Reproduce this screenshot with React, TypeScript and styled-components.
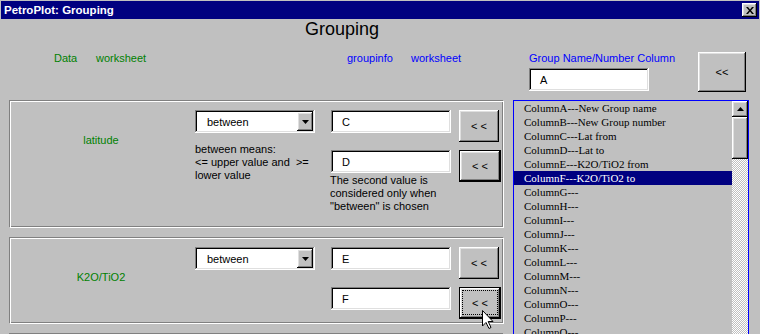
import React from 'react';
import styled, { createGlobalStyle, css } from 'styled-components';

const GlobalStyle = createGlobalStyle`
  html, body {
    margin: 0;
    padding: 0;
    background: #c0c0c0;
  }
  body {
    font-family: "Liberation Sans", Arial, sans-serif;
    font-size: 11px;
    color: #000;
  }
  * {
    box-sizing: border-box;
  }
`;

const raised = css`
  background: #c0c0c0;
  box-shadow: inset -1px -1px #000, inset 1px 1px #fff, inset -2px -2px #808080,
    inset 2px 2px #dfdfdf;
`;

const sunken = css`
  background: #fff;
  box-shadow: inset -1px -1px #fff, inset 1px 1px #808080, inset -2px -2px #dfdfdf,
    inset 2px 2px #000;
`;

const columns = [
  'ColumnA---New Group name',
  'ColumnB---New Group number',
  'ColumnC---Lat from',
  'ColumnD---Lat to',
  'ColumnE---K2O/TiO2 from',
  'ColumnF---K2O/TiO2 to',
  'ColumnG---',
  'ColumnH---',
  'ColumnI---',
  'ColumnJ---',
  'ColumnK---',
  'ColumnL---',
  'ColumnM---',
  'ColumnN---',
  'ColumnO---',
  'ColumnP---',
  'ColumnQ---',
  'ColumnR---',
];

const DownArrow = () => (
  <svg width="7" height="4" viewBox="0 0 7 4">
    <polygon points="0,0 7,0 3.5,4" fill="#000" />
  </svg>
);

const UpArrow = () => (
  <svg width="7" height="4" viewBox="0 0 7 4">
    <polygon points="0,4 7,4 3.5,0" fill="#000" />
  </svg>
);

const CloseGlyph = () => (
  <svg width="8" height="7" viewBox="0 0 8 7">
    <path d="M0 0h2l2 2.5L6 0h2L5 3.5 8 7H6L4 4.5 2 7H0l3-3.5z" fill="#000" />
  </svg>
);

const Pointer = () => (
  <svg width="12" height="19" viewBox="0 0 12 19">
    <polygon
      points="0.5,0.5 0.5,16 4,12.5 7,18.5 9,17.5 6.2,11.5 11,11.5"
      fill="#fff"
      stroke="#000"
      strokeWidth="1"
    />
  </svg>
);

type GroupProps = {
  label: string;
  from: string;
  to: string;
  height: number;
  withNotes?: boolean;
  focusLast?: boolean;
};

const GroupFrame = ({ label, from, to, height, withNotes, focusLast }: GroupProps) => (
  <Frame $h={height}>
    <FrameLabel>{label}</FrameLabel>
    <Col>
      <Select>
        <span>between</span>
        <DropButton>
          <DownArrow />
        </DropButton>
      </Select>
      {withNotes && (
        <Note $mt={10}>
          between means:
          <br />
          {'<= upper value and  >='}
          <br />
          lower value
        </Note>
      )}
    </Col>
    <Col>
      <TextBox>{from}</TextBox>
      <TextBox $mt={17}>{to}</TextBox>
      {withNotes && (
        <Note $mt={1} $ml={-1}>
          The second value is
          <br />
          considered only when
          <br />
          "between" is chosen
        </Note>
      )}
    </Col>
    <Col>
      <Button $w={40} $h={32}>
        &lt; &lt;
      </Button>
      <Button $w={42} $h={32} $mt={8} $default $focused={focusLast}>
        &lt; &lt;
      </Button>
    </Col>
  </Frame>
);

const App = () => {
  return (
    <Window>
      <GlobalStyle />
      <TitleBar>
        <span>PetroPlot: Grouping</span>
        <CloseButton>
          <CloseGlyph />
        </CloseButton>
      </TitleBar>
      <Main>
        <LeftHeader>
          <Heading>Grouping</Heading>
          <LabelsRow>
            <Caption $tone="green" $w={42}>
              Data
            </Caption>
            <Caption $tone="green" $w={251}>
              worksheet
            </Caption>
            <Caption $tone="blue" $w={64}>
              groupinfo
            </Caption>
            <Caption $tone="blue">worksheet</Caption>
          </LabelsRow>
        </LeftHeader>
        <RightHeader>
          <GroupField>
            <Caption $tone="blue">Group Name/Number Column</Caption>
            <TextBox $mt={3}>A</TextBox>
          </GroupField>
          <HeaderButton $w={48} $h={40}>
            &lt;&lt;
          </HeaderButton>
        </RightHeader>
        <FrameStack>
          <GroupFrame label="latitude" from="C" to="D" height={128} withNotes />
          <GroupFrame label="K2O/TiO2" from="E" to="F" height={87} focusLast />
          <Frame $h={80} />
        </FrameStack>
        <ListBox>
          <ListItems>
            {columns.map((c, i) => (
              <ListItem key={c} $selected={i === 5}>
                {c}
              </ListItem>
            ))}
          </ListItems>
          <ScrollBar>
            <ScrollButton>
              <UpArrow />
            </ScrollButton>
            <ScrollThumb />
          </ScrollBar>
        </ListBox>
      </Main>
      <Cursor>
        <Pointer />
      </Cursor>
    </Window>
  );
};

export default App;

const Window = styled.div`
  position: relative;
  width: 760px;
  height: 334px;
  overflow: hidden;
  background: #c0c0c0;
`;

const TitleBar = styled.div`
  display: flex;
  align-items: center;
  justify-content: space-between;
  height: 18px;
  margin: 1px 1px 0;
  padding: 0 2px 0 3px;
  background: #000080;
  color: #fff;
  font-weight: bold;
  font-size: 11.5px;
`;

const CloseButton = styled.div`
  ${raised};
  width: 15px;
  height: 14px;
  display: flex;
  align-items: center;
  justify-content: center;
`;

const Main = styled.div`
  display: grid;
  grid-template-columns: 495px 236px;
  grid-template-rows: 81px auto;
  column-gap: 9px;
  padding-left: 9px;
`;

const LeftHeader = styled.div`
  display: flex;
  flex-direction: column;
`;

const Heading = styled.div`
  font-size: 18px;
  line-height: 21px;
  padding-left: 296px;
`;

const LabelsRow = styled.div`
  display: flex;
  margin-top: 12px;
  padding-left: 45px;
`;

const Caption = styled.span<{ $tone: 'green' | 'blue'; $w?: number }>`
  display: block;
  line-height: 13px;
  white-space: nowrap;
  color: ${({ $tone }) => ($tone === 'green' ? '#008000' : '#0000ff')};
  width: ${({ $w }) => ($w ? `${$w}px` : 'auto')};
`;

const RightHeader = styled.div`
  display: flex;
  align-items: flex-start;
  padding-top: 33px;
`;

const GroupField = styled.div`
  display: flex;
  flex-direction: column;
  padding-left: 16px;
`;

const TextBox = styled.div<{ $mt?: number }>`
  ${sunken};
  width: 120px;
  height: 23px;
  margin-top: ${({ $mt }) => $mt || 0}px;
  padding-left: 11px;
  display: flex;
  align-items: center;
`;

const Button = styled.div<{
  $w: number;
  $h: number;
  $mt?: number;
  $default?: boolean;
  $focused?: boolean;
}>`
  ${raised};
  position: relative;
  width: ${({ $w }) => $w}px;
  height: ${({ $h }) => $h}px;
  margin-top: ${({ $mt }) => $mt || 0}px;
  display: flex;
  align-items: center;
  justify-content: center;
  ${({ $default }) =>
    $default &&
    css`
      border: 1px solid #000;
    `}
  ${({ $focused }) =>
    $focused &&
    css`
      &::after {
        content: '';
        position: absolute;
        inset: 2px 2px 3px 2px;
        border: 1px dotted #000;
      }
    `}
`;

const HeaderButton = styled(Button)`
  margin-left: auto;
  margin-right: 3px;
`;

const FrameStack = styled.div`
  display: flex;
  flex-direction: column;
  gap: 9px;
`;

const Frame = styled.section<{ $h: number }>`
  height: ${({ $h }) => $h}px;
  flex-shrink: 0;
  border: 1px solid;
  border-color: #808080 #fff #fff #808080;
  box-shadow: inset 1px 1px #fff, inset -1px -1px #808080;
  padding-top: 9px;
  display: grid;
  grid-template-columns: 185px 136px 128px 42px;
  align-items: start;
`;

const FrameLabel = styled.div`
  padding: 24px 3px 0 0;
  text-align: center;
  line-height: 13px;
  color: #008000;
`;

const Col = styled.div`
  display: flex;
  flex-direction: column;
  align-items: flex-start;
`;

const Select = styled.div`
  ${sunken};
  width: 120px;
  height: 23px;
  padding: 2px 2px 2px 12px;
  display: flex;
  align-items: center;
  justify-content: space-between;
`;

const DropButton = styled.div`
  ${raised};
  width: 16px;
  height: 19px;
  display: flex;
  align-items: center;
  justify-content: center;
`;

const Note = styled.div<{ $mt?: number; $ml?: number }>`
  margin-top: ${({ $mt }) => $mt || 0}px;
  margin-left: ${({ $ml }) => $ml || 0}px;
  line-height: 13px;
  white-space: pre;
`;

const ListBox = styled.div`
  height: 260px;
  border: 1px solid #0000ff;
  display: flex;
  background: #c0c0c0;
`;

const ListItems = styled.div`
  flex: 1;
  display: flex;
  flex-direction: column;
  overflow: hidden;
`;

const ListItem = styled.div<{ $selected?: boolean }>`
  height: 14px;
  flex-shrink: 0;
  line-height: 14px;
  padding-left: 10px;
  font-family: "Liberation Serif", "Times New Roman", serif;
  font-size: 11px;
  white-space: nowrap;
  background: ${({ $selected }) => ($selected ? '#000080' : 'transparent')};
  color: ${({ $selected }) => ($selected ? '#fff' : '#000')};
`;

const ScrollBar = styled.div`
  width: 16px;
  display: flex;
  flex-direction: column;
  background-color: #c0c0c0;
  background-image: repeating-conic-gradient(#fff 0 25%, #c0c0c0 0 50%);
  background-size: 2px 2px;
`;

const ScrollButton = styled.div`
  ${raised};
  height: 16px;
  display: flex;
  align-items: center;
  justify-content: center;
`;

const ScrollThumb = styled.div`
  ${raised};
  height: 42px;
`;

const Cursor = styled.div`
  position: absolute;
  left: 482px;
  top: 310px;
  line-height: 0;
`;
